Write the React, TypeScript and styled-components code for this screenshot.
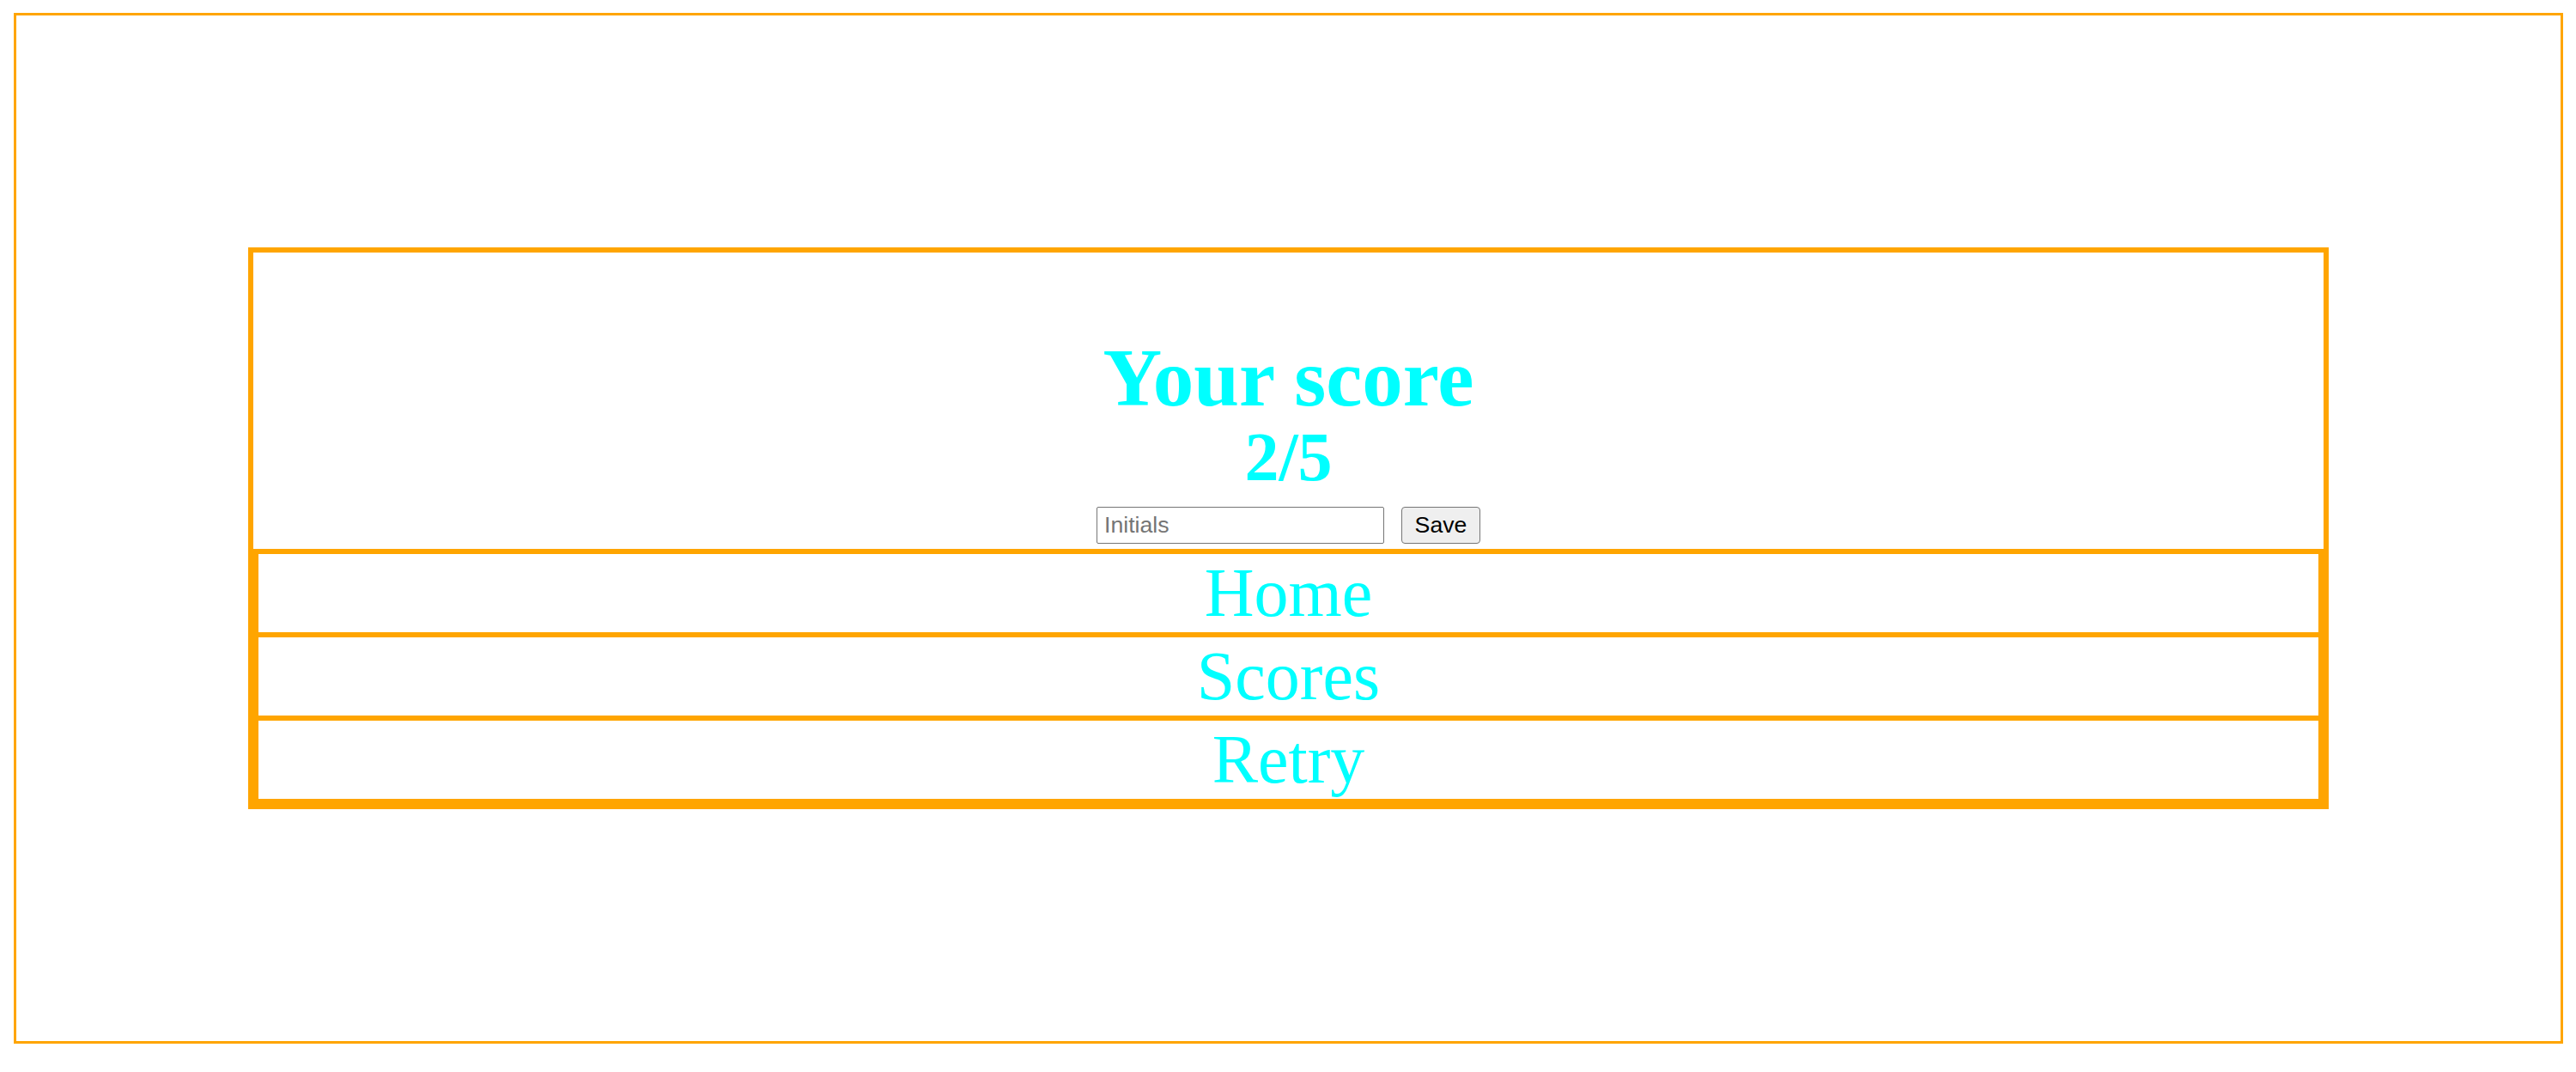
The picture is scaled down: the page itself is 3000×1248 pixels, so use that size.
import React from "react";
import styled, { createGlobalStyle } from "styled-components";

const GlobalStyle = createGlobalStyle`
  html, body {
    margin: 0;
    padding: 0;
    background: #ffffff;
  }
  body {
    font-family: "Liberation Serif", "Times New Roman", serif;
  }
  * { box-sizing: border-box; }
`;

const Frame = styled.div`
  margin: 15px 15px 0 16px;
  border: 3px solid #ffa500;
  padding: 270px;
`;

const Card = styled.section`
  border: 6px solid #ffa500;
  display: flex;
  flex-direction: column;
`;

const Header = styled.header`
  display: flex;
  flex-direction: column;
  align-items: center;
  padding: 99px 0 6px;
`;

const Title = styled.h1`
  margin: 0;
  font-family: "Liberation Serif", "Times New Roman", serif;
  font-weight: 700;
  font-size: 95px;
  line-height: 95px;
  color: #00ffff;
`;

const Score = styled.h2`
  margin: 4px 0 0;
  font-family: "Liberation Serif", "Times New Roman", serif;
  font-weight: 700;
  font-size: 80px;
  line-height: 80px;
  color: #00ffff;
`;

const Form = styled.form`
  display: flex;
  align-items: center;
  gap: 20px;
  margin-top: 18px;
  height: 43px;
`;

const Input = styled.input`
  width: 335px;
  height: 43px;
  border: 1px solid #767676;
  border-radius: 2px;
  padding: 0 8px;
  font-family: "Liberation Sans", Arial, sans-serif;
  font-size: 26.67px;
  color: #000;
  background: #fff;
  &::placeholder {
    color: #757575;
  }
`;

const SaveButton = styled.button`
  width: 92px;
  height: 43px;
  border: 1px solid #767676;
  border-radius: 4px;
  background: #efefef;
  font-family: "Liberation Sans", Arial, sans-serif;
  font-size: 26.67px;
  color: #000;
  padding: 0;
`;

const Nav = styled.nav`
  display: flex;
  flex-direction: column;
`;

const NavItem = styled.button<{ $last?: boolean }>`
  display: block;
  width: 100%;
  height: ${(p) => (p.$last ? 103 : 97)}px;
  margin: 0;
  padding: 0;
  background: #fff;
  border: 6px solid #ffa500;
  border-bottom-width: ${(p) => (p.$last ? 6 : 0)}px;
  font-family: "Liberation Serif", "Times New Roman", serif;
  font-weight: 400;
  font-size: 80px;
  line-height: 91px;
  color: #00ffff;
  text-align: center;
  cursor: pointer;
`;

const items = ["Home", "Scores", "Retry"];

export default function App() {
  return (
    <>
      <GlobalStyle />
      <Frame>
        <Card>
          <Header>
            <Title>Your score</Title>
            <Score>2/5</Score>
            <Form onSubmit={(e) => e.preventDefault()}>
              <Input type="text" placeholder="Initials" />
              <SaveButton type="submit">Save</SaveButton>
            </Form>
          </Header>
          <Nav>
            {items.map((label, i) => (
              <NavItem key={label} $last={i === items.length - 1}>
                {label}
              </NavItem>
            ))}
          </Nav>
        </Card>
      </Frame>
    </>
  );
}
